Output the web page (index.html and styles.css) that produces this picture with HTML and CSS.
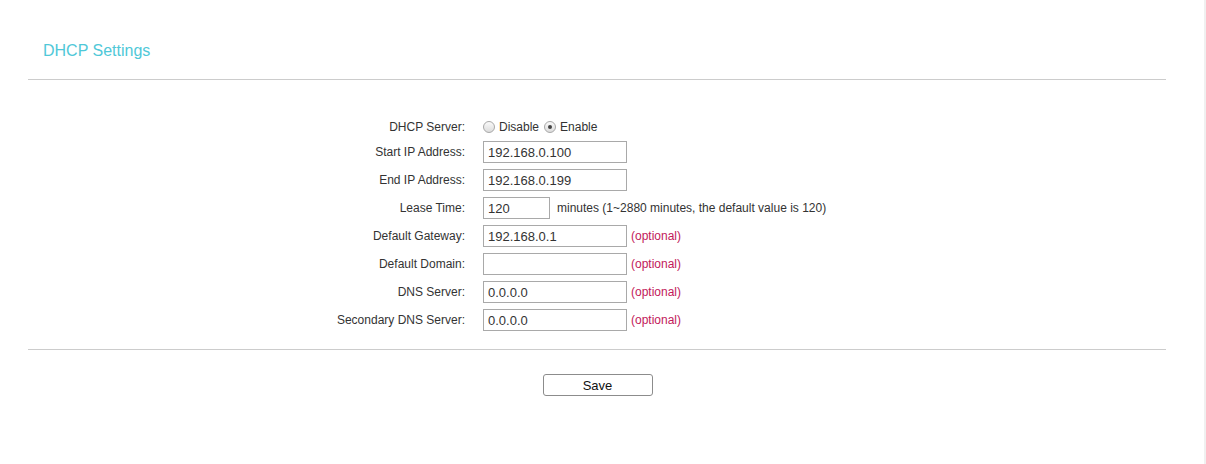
FILE: index.html
```html
<!DOCTYPE html>
<html lang="en">
<head>
<meta charset="UTF-8">
<title>DHCP Settings</title>
<link rel="stylesheet" href="styles.css">
</head>
<body>
<div class="page">
    <div class="panel">
        <!-- title -->
        <div class="panel-head">
            <h2 class="panel-title">DHCP Settings</h2>
        </div>

        <!-- form -->
        <div class="panel-body">
            <div class="form-row row-radio">
                <label class="form-label">DHCP Server:</label>
                <div class="form-field">
                    <label class="radio"><input type="radio" name="dhcp"> Disable</label>
                    <label class="radio"><input type="radio" name="dhcp" checked> Enable</label>
                </div>
            </div>
            <div class="form-row">
                <label class="form-label">Start IP Address:</label>
                <div class="form-field"><input class="text-input" type="text" value="192.168.0.100"></div>
            </div>
            <div class="form-row">
                <label class="form-label">End IP Address:</label>
                <div class="form-field"><input class="text-input" type="text" value="192.168.0.199"></div>
            </div>
            <div class="form-row">
                <label class="form-label">Lease Time:</label>
                <div class="form-field">
                    <input class="text-input short" type="text" value="120">
                    <span class="hint">minutes (1~2880 minutes, the default value is 120)</span>
                </div>
            </div>
            <div class="form-row">
                <label class="form-label">Default Gateway:</label>
                <div class="form-field">
                    <input class="text-input" type="text" value="192.168.0.1">
                    <span class="optional">(optional)</span>
                </div>
            </div>
            <div class="form-row">
                <label class="form-label">Default Domain:</label>
                <div class="form-field">
                    <input class="text-input" type="text" value="">
                    <span class="optional">(optional)</span>
                </div>
            </div>
            <div class="form-row">
                <label class="form-label">DNS Server:</label>
                <div class="form-field">
                    <input class="text-input" type="text" value="0.0.0.0">
                    <span class="optional">(optional)</span>
                </div>
            </div>
            <div class="form-row">
                <label class="form-label">Secondary DNS Server:</label>
                <div class="form-field">
                    <input class="text-input" type="text" value="0.0.0.0">
                    <span class="optional">(optional)</span>
                </div>
            </div>
        </div>

        <!-- actions -->
        <div class="panel-foot">
            <button class="btn-save" type="button">Save</button>
        </div>
    </div>
    <div class="side-strip"></div>
</div>
</body>
</html>
```

FILE: styles.css
```css
/* global */
body, html {
    margin: 0;
    padding: 0;
    background: #fff;
    font-family: "Liberation Sans", Arial, sans-serif;
    font-size: 12px;
    color: #333;
}

.page {
    display: flex;
    min-height: 464px;
}

.panel {
    flex: 1;
    margin-left: 28px;
    margin-right: 38px;
}

.side-strip {
    width: 2px;
    background: #f0f0f0;
}

/* title */
.panel-head {
    padding: 41px 15px 18px;
    border-bottom: 1px solid #cccccc;
}

.panel-title {
    margin: 0;
    font-size: 16px;
    line-height: 20px;
    font-weight: normal;
    color: #4fc8d8;
}

/* form rows */
.panel-body {
    padding: 39px 0 18px;
    border-bottom: 1px solid #cccccc;
    display: flex;
    flex-direction: column;
    gap: 6px;
}

.form-row {
    display: grid;
    grid-template-columns: 437px 1fr;
    column-gap: 18px;
    align-items: center;
    height: 22px;
}

.row-radio {
    height: 16px;
}

.form-label {
    text-align: right;
    white-space: nowrap;
}

.form-field {
    display: flex;
    align-items: center;
    white-space: nowrap;
}

.text-input {
    box-sizing: border-box;
    width: 144px;
    height: 22px;
    margin: 0;
    padding: 0 4px;
    border: 1px solid #a9a9a9;
    font-family: "Liberation Sans", Arial, sans-serif;
    font-size: 13px;
    color: #333;
    outline: none;
}

.text-input.short {
    width: 67px;
}

.hint {
    margin-left: 7px;
}

.optional {
    margin-left: 4px;
    color: #c2185b;
}

/* radios */
.radio {
    display: inline-flex;
    align-items: center;
    gap: 4px;
    margin-right: 5px;
}

.radio input {
    appearance: none;
    -webkit-appearance: none;
    box-sizing: border-box;
    width: 12px;
    height: 12px;
    margin: 0;
    border: 1px solid #a8a8a8;
    border-radius: 50%;
    background: linear-gradient(#fafafa, #dcdcdc);
    position: relative;
}

.radio input:checked::after {
    content: '';
    position: absolute;
    left: 3px;
    top: 3px;
    width: 4px;
    height: 4px;
    border-radius: 50%;
    background: #444;
}

/* save */
.panel-foot {
    padding-top: 24px;
    display: flex;
    justify-content: center;
}

.btn-save {
    box-sizing: border-box;
    width: 110px;
    height: 22px;
    margin-left: 1px;
    border: 1px solid #8c8c8c;
    border-radius: 3px;
    background: #fff;
    font-family: "Liberation Sans", Arial, sans-serif;
    font-size: 13px;
    color: #111;
    cursor: pointer;
}
```
